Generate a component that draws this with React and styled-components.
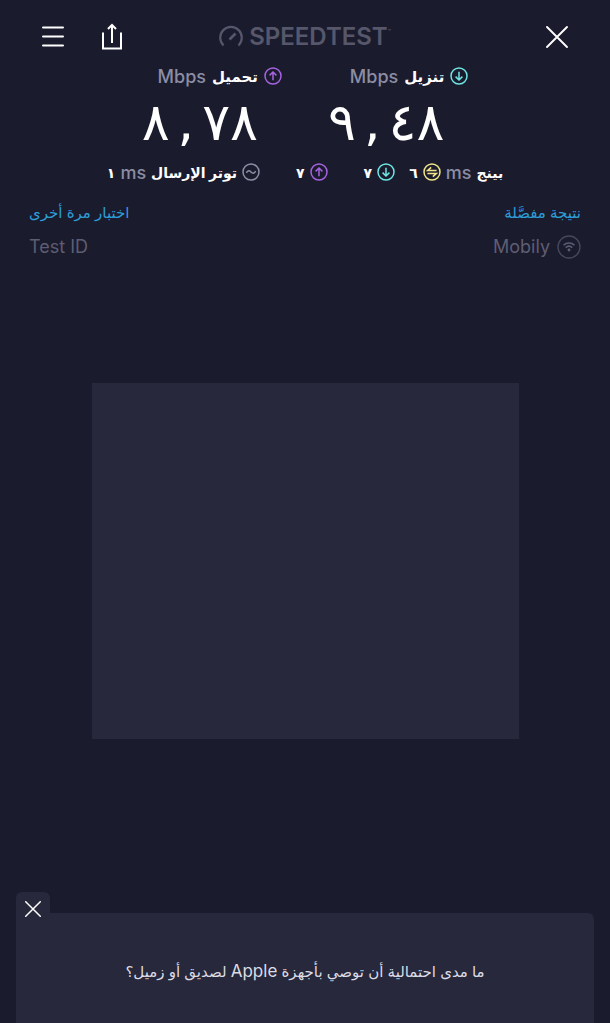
import React from 'react';
import styled, { createGlobalStyle } from 'styled-components';

const GlobalStyle = createGlobalStyle`
  * {
    box-sizing: border-box;
  }

  body {
    margin: 0;
    background: #1b1b2e;
    color: #ffffff;
    font-family: Inter, 'DejaVu Sans', sans-serif;
  }
`;

const Page = styled.div`
  min-height: 100vh;
  display: flex;
  flex-direction: column;
`;

const Header = styled.header`
  direction: ltr;
  display: grid;
  grid-template-columns: 1fr auto 1fr;
  align-items: center;
  height: 64px;
  padding: 10px 40px 0;
`;

const HeaderGroup = styled.div`
  display: flex;
  gap: 34px;
  justify-content: ${props => props.$end ? 'flex-end' : 'flex-start'};
`;

const IconButton = styled.button`
  display: flex;
  align-items: center;
  justify-content: center;
  padding: 0;
  border: none;
  background: none;
  color: #ffffff;
  cursor: pointer;
`;

const Logo = styled.h1`
  display: flex;
  align-items: center;
  gap: 6px;
  margin: 0;
  color: #56576b;
  font-size: 24px;
  line-height: 28px;
  font-weight: 600;
`;

const TradeMark = styled.sup`
  font-size: 5px;
  line-height: 5px;
  vertical-align: 12px;
`;

const Speeds = styled.section`
  display: flex;
  justify-content: center;
  gap: 46px;
`;

const Speed = styled.div`
  display: flex;
  flex-direction: column;
`;

const Label = styled.div`
  display: flex;
  align-items: center;
  gap: 6px;
  height: 24px;
  font-size: 15px;
  font-weight: 600;
`;

const Unit = styled.span`
  color: #8b8da3;
  font-size: 18px;
  font-weight: 500;
`;

const SpeedValue = styled.div`
  direction: ltr;
  display: flex;
  justify-content: flex-end;
  gap: 8px;
  padding-right: 24px;
  font-family: 'DejaVu Sans', sans-serif;
  font-size: 52px;
  line-height: 68px;
`;

const Latency = styled.section`
  display: flex;
  justify-content: center;
  align-items: center;
  gap: 36px;
  height: 32px;
`;

const LatencyGroup = styled.div`
  display: flex;
  align-items: center;
  gap: ${props => props.$wide ? '14px' : '5px'};
  font-size: 14px;
  font-weight: 600;
`;

const Row = styled.div`
  display: flex;
  justify-content: space-between;
  align-items: center;
  height: ${props => props.$tall ? '50px' : '18px'};
  padding: 0 29px;
`;

const TextLink = styled.a`
  color: #2d9fd8;
  font-size: 15px;
  line-height: 20px;
  text-decoration: none;
`;

const Muted = styled.span`
  display: flex;
  align-items: center;
  gap: 7px;
  color: #5d5e72;
  font-size: 18px;
  line-height: 24px;
`;

const AdArea = styled.main`
  flex: 1;
  display: flex;
  align-items: center;
  justify-content: center;
  padding: 20px 0 46px;
`;

const AdBox = styled.div`
  width: 70%;
  aspect-ratio: 6 / 5;
  background: #27283b;
`;

const Survey = styled.aside`
  direction: ltr;
  padding: 0 16px;
`;

const SurveyTab = styled.div`
  display: flex;
  align-items: flex-start;
  justify-content: center;
  width: 34px;
  height: 21px;
  padding-top: 9px;
  border-radius: 6px 6px 0 0;
  background: #27283b;
`;

const SurveyBody = styled.div`
  direction: rtl;
  padding: 47px 20px 40px;
  border-radius: 0 6px 0 0;
  background: #27283b;
  color: #dcdce6;
  font-size: 15px;
  line-height: 22px;
  text-align: center;
`;

const Brand = styled.span`
  font-size: 17px;
`;

function CloseIcon({ size }) {
  return (
    <svg width={size} height={size} viewBox="0 0 22 22" fill="none" stroke="currentColor" strokeWidth={size > 16 ? 1.8 : 2} strokeLinecap="round" aria-hidden="true">
      <path d="M1 1l20 20M21 1L1 21" />
    </svg>
  );
}

const glyphs = {
  down: <path d="M9 4.8v8M5.6 9.6L9 13l3.4-3.4" />,
  up: <path d="M9 13.2v-8M5.6 8.4L9 5l3.4 3.4" />,
  ping: <path d="M13.6 7.6H4.6L8.2 4.4M4.4 10.4h9L9.8 13.6" />,
  jitter: <path d="M4.4 9.8c1.4-2.6 3-2.4 4.6-.8s3.2 1.8 4.6-.8" />,
};

const glyphColors = {
  down: '#6ee6e2',
  up: '#a663e0',
  ping: '#eee58a',
  jitter: '#8d8fa5',
};

function CircleIcon({ type }) {
  return (
    <svg width="18" height="18" viewBox="0 0 18 18" fill="none" stroke={glyphColors[type]} strokeWidth="1.5" aria-hidden="true">
      <circle cx="9" cy="9" r="8" />
      {glyphs[type]}
    </svg>
  );
}

const speeds = [
  { type: 'down', label: 'تنزيل', whole: '٩', fraction: '٤٨' },
  { type: 'up', label: 'تحميل', whole: '٨', fraction: '٧٨' },
];

function App() {
  return (
    <Page dir="rtl" lang="ar">
      <GlobalStyle />
      <Header>
        <HeaderGroup>
          <IconButton aria-label="القائمة">
            <svg width="26" height="28" viewBox="0 0 26 28" stroke="currentColor" strokeWidth="2" strokeLinecap="round" aria-hidden="true">
              <path d="M3 4.500h20M3 13.500h20M3 22.500h20" />
            </svg>
          </IconButton>
          <IconButton aria-label="مشاركة">
            <svg width="24" height="28" viewBox="0 0 24 28" fill="none" stroke="currentColor" strokeWidth="2" aria-hidden="true">
              <path d="M3 9.500V25.500h18V9.500M12 20V2M8 6l4-4 4 4" />
            </svg>
          </IconButton>
        </HeaderGroup>
        <Logo>
          <svg width="24" height="24" viewBox="0 0 24 24" fill="none" stroke="currentColor" strokeWidth="2.2" aria-hidden="true">
            <path d="M4.500 20.500A10.800 10.800 0 1 1 19.500 20.500" />
            <path d="M10.500 14.500L16.500 8.500" strokeWidth="2.6" />
          </svg>
          <span>SPEEDTEST<TradeMark>™</TradeMark></span>
        </Logo>
        <HeaderGroup $end>
          <IconButton aria-label="إغلاق">
            <svg width="26" height="26" viewBox="0 0 26 26" stroke="currentColor" strokeWidth="1.9" strokeLinecap="round" aria-hidden="true">
              <path d="M3 3l20 20M23 3L3 23" />
            </svg>
          </IconButton>
        </HeaderGroup>
      </Header>

      <Speeds>
        {speeds.map(speed => (
          <Speed key={speed.type}>
            <Label>
              <CircleIcon type={speed.type} />
              {speed.label}
              <Unit>Mbps</Unit>
            </Label>
            <SpeedValue>
              <span>{speed.whole}</span>
              <span>,</span>
              <span>{speed.fraction}</span>
            </SpeedValue>
          </Speed>
        ))}
      </Speeds>

      <Latency>
        <LatencyGroup $wide>
          <LatencyGroup>
            <span>بينج</span>
            <Unit>ms</Unit>
            <CircleIcon type="ping" />
            <span>٦</span>
          </LatencyGroup>
          <LatencyGroup>
            <CircleIcon type="down" />
            <span>٧</span>
          </LatencyGroup>
        </LatencyGroup>
        <LatencyGroup>
          <CircleIcon type="up" />
          <span>٧</span>
        </LatencyGroup>
        <LatencyGroup>
          <CircleIcon type="jitter" />
          <span>توتر الإرسال</span>
          <Unit>ms</Unit>
          <span>١</span>
        </LatencyGroup>
      </Latency>

      <Row $tall>
        <TextLink href="#details">نتيجة مفصَّلة</TextLink>
        <TextLink href="#again">اختبار مرة أخرى</TextLink>
      </Row>
      <Row>
        <Muted>
          <svg width="24" height="24" viewBox="0 0 24 24" fill="none" stroke="currentColor" aria-hidden="true">
            <circle cx="12" cy="12" r="11" stroke="#46475b" strokeWidth="1.4" />
            <path d="M6.500 10.200a8 8 0 0 1 11 0M8.700 12.600a5 5 0 0 1 6.600 0" strokeWidth="1.5" />
            <circle cx="12" cy="15" r="1.4" fill="currentColor" stroke="none" />
          </svg>
          Mobily
        </Muted>
        <Muted>Test ID</Muted>
      </Row>

      <AdArea>
        <AdBox />
      </AdArea>

      <Survey>
        <SurveyTab>
          <IconButton aria-label="إغلاق الاستبيان">
            <CloseIcon size={16} />
          </IconButton>
        </SurveyTab>
        <SurveyBody>
          ما مدى احتمالية أن توصي بأجهزة <Brand>Apple</Brand> لصديق أو زميل؟
        </SurveyBody>
      </Survey>
    </Page>
  );
}

export default App;
